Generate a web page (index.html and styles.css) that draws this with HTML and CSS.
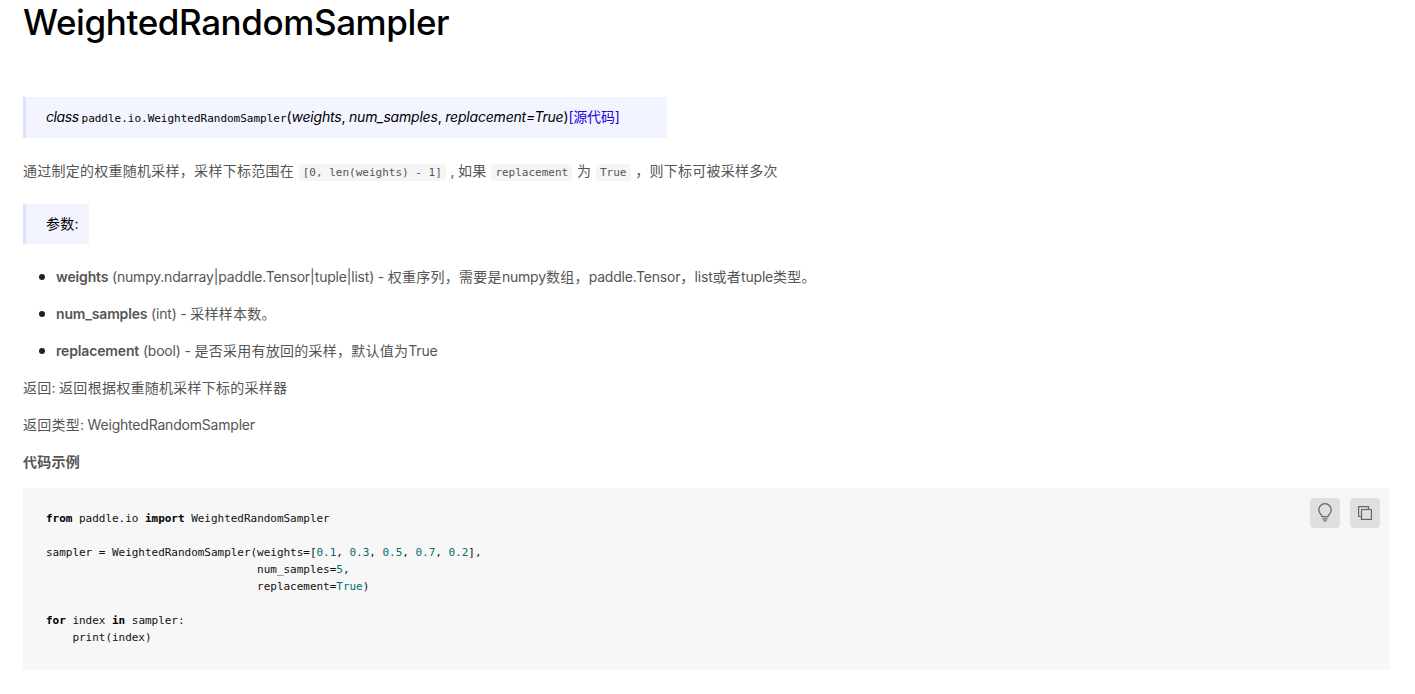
FILE: index.html
```html
<!DOCTYPE html>
<html lang="zh">
<head>
<meta charset="utf-8">
<title>WeightedRandomSampler</title>
<link rel="stylesheet" href="styles.css">
</head>
<body>
<main class="doc">
  <h1 class="title">WeightedRandomSampler</h1>
  <div class="sig"><em class="sig-kw">class</em> <code class="sig-name">paddle.io.WeightedRandomSampler</code>(<em>weights</em>, <em>num_samples</em>, <em>replacement=True</em>)<a class="src" href="#">[源代码]</a></div>
  <p class="para para-lead"><span class="zh">通过制定的权重随机采样，采样下标范围在</span> <code class="lit">[0, len(weights) - 1]</code> , <span class="zh">如果</span> <code class="lit">replacement</code> <span class="zh">为</span> <code class="lit">True</code> <span class="zh">，则下标可被采样多次</span></p>
  <div class="sig sig-params"><span class="zh">参数</span>:</div>
  <ul class="params">
    <li><strong>weights</strong> (numpy.ndarray|paddle.Tensor|tuple|list) - <span class="zh">权重序列，需要是</span>numpy<span class="zh">数组，</span>paddle.Tensor<span class="zh">，</span>list<span class="zh">或者</span>tuple<span class="zh">类型。</span></li>
    <li><strong>num_samples</strong> (int) - <span class="zh">采样样本数。</span></li>
    <li><strong>replacement</strong> (bool) - <span class="zh">是否采用有放回的采样，默认值为</span>True</li>
  </ul>
  <p class="para"><span class="zh">返回</span>: <span class="zh">返回根据权重随机采样下标的采样器</span></p>
  <p class="para"><span class="zh">返回类型</span>: WeightedRandomSampler</p>
  <p class="para heading"><span class="zh">代码示例</span></p>
  <div class="code">
    <div class="tools">
      <button class="tool" type="button" aria-label="hint"><svg width="18" height="20" viewBox="0 0 18 20" fill="none" stroke="#666" stroke-width="1.3"><path d="M6 13.6c0-2-3.2-3-3.2-6.7a6.2 6.2 0 0 1 12.4 0c0 3.700-3.200 4.700-3.200 6.700z"/><path d="M6.500 15.800h5M7.500 17.800h3"/></svg></button>
      <button class="tool" type="button" aria-label="copy"><svg width="14" height="14" viewBox="0 0 14 14" fill="none" stroke="#666" stroke-width="1.200"><path d="M3 10.500H.6V.6h9.900V3"/><rect x="3.500" y="3.500" width="9.900" height="9.900"/></svg></button>
    </div>
    <div class="listing">
      <div class="line"><b>from</b> paddle.io <b>import</b> WeightedRandomSampler</div>
      <div class="line"></div>
      <div class="line">sampler = WeightedRandomSampler(weights=[<i>0.1</i>, <i>0.3</i>, <i>0.5</i>, <i>0.7</i>, <i>0.2</i>],</div>
      <div class="line">                                num_samples=<i>5</i>,</div>
      <div class="line">                                replacement=<i>True</i>)</div>
      <div class="line"></div>
      <div class="line"><b>for</b> index <b>in</b> sampler:</div>
      <div class="line">    print(index)</div>
    </div>
  </div>
</main>
</body>
</html>
```
FILE: styles.css
```css
* { box-sizing: border-box; }
html, body { margin: 0; background: #fff; }
body {
  font-family: Inter, "Noto Sans CJK SC", sans-serif;
  font-size: 14px;
  line-height: 20px;
  letter-spacing: -0.2px;
  color: #555;
}
.zh { letter-spacing: 0.26px; }
.doc { padding: 0 25px 0 23px; }
.title {
  margin: 0 0 52px;
  font-size: 35px;
  line-height: 45px;
  font-weight: 500;
  letter-spacing: -0.4px;
  color: #000;
}
.sig {
  width: 644px;
  height: 41px;
  padding: 0 0 0 20px;
  line-height: 40px;
  white-space: nowrap;
  border-left: 3px solid #dfe3fa;
  background: #f2f4ff;
  color: #000;
}
.sig-kw { letter-spacing: -0.4px; }
.sig-params { width: 66px; height: 40px; margin-top: 21px; }
.sig-name {
  font-family: "DejaVu Sans Mono", monospace;
  font-size: 11px;
  letter-spacing: -0.01px;
  margin-left: -1px;
}
.src { color: #2200e0; text-decoration: none; }
.para { margin: 17px 0 0; }
.para-lead { margin-top: 23px; }
.heading { font-weight: 700; }
.lit {
  font-family: "DejaVu Sans Mono", monospace;
  font-size: 11px;
  letter-spacing: 0;
  padding: 2px 4px;
  margin: 0 1px;
  border-radius: 3px;
  background: #f5f5f5;
}
.params { margin: 23px 0 0; padding: 0 0 0 33px; list-style: none; }
.params li { position: relative; margin-top: 17px; }
.params li:first-child { margin-top: 0; }
.params li::before {
  content: "";
  position: absolute;
  left: -17px;
  top: 7px;
  width: 6px;
  height: 6px;
  border-radius: 50%;
  background: #222;
}
.params strong { font-weight: 600; letter-spacing: -0.15px; }
.code {
  position: relative;
  margin-top: 16px;
  padding: 22px 23px 24px;
  background: #f7f7f7;
}
.listing {
  font-family: "DejaVu Sans Mono", monospace;
  font-size: 11px;
  line-height: 17px;
  letter-spacing: -0.025px;
  color: #111;
}
.line { height: 17px; white-space: pre; }
.listing b { font-weight: 700; color: #000; }
.listing i { font-style: normal; color: #007070; }
.tools {
  position: absolute;
  top: 10px;
  right: 10px;
  display: flex;
  gap: 10px;
}
.tool {
  width: 30px;
  height: 30px;
  padding: 0;
  display: flex;
  align-items: center;
  justify-content: center;
  border: 0;
  border-radius: 4px;
  background: #dfdfdf;
}
```
